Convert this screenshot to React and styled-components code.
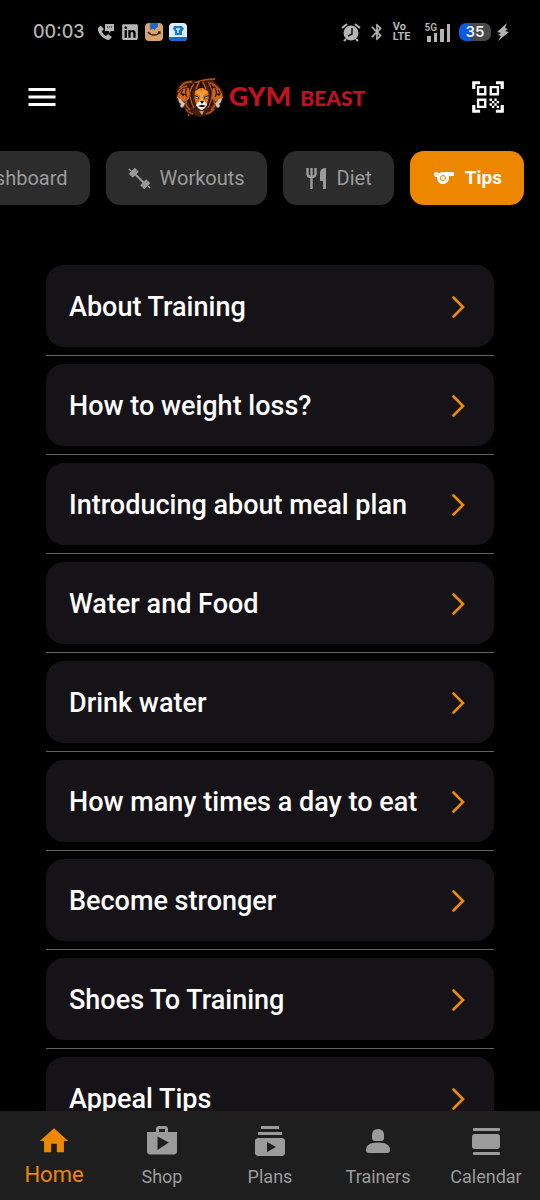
import React, { useState } from 'react';
import styled, { createGlobalStyle } from 'styled-components';
import { MdMenu, MdQrCodeScanner, MdHome, MdShop, MdSubscriptions, MdSports, MdBluetooth } from 'react-icons/md';
import { FaLinkedin } from 'react-icons/fa';

const GlobalStyle = createGlobalStyle`
  * { box-sizing: border-box; }
  body { margin: 0; background: #000; }
  button { font: inherit; letter-spacing: inherit; border: 0; background: none; padding: 0; cursor: pointer; }
  svg { display: block; flex: none; }
`;

const Screen = styled.div`
  display: flex;
  flex-direction: column;
  height: 100vh;
  background: #000;
  color: #fff;
  font-family: Roboto, "Liberation Sans", sans-serif;
`;

const StatusBar = styled.div`
  display: flex;
  align-items: center;
  justify-content: space-between;
  height: 64px;
  padding: 0 31px 0 33px;
  color: #b4b4b4;
  flex: none;
`;

const StatusGroup = styled.div`
  display: flex;
  align-items: center;
  gap: 6px;
`;

const Clock = styled.time`
  font: 500 18px/24px Inter, sans-serif;
  margin-right: 6px;
`;

const VoLte = styled.span`
  font: 700 11px/10px Roboto, sans-serif;
  text-align: left;
`;

const Signal = styled.span`
  display: flex;
  align-items: flex-start;
  margin: 0 2px 0 8px;
`;

const NetworkLabel = styled.span`
  font: 600 10px/10px Roboto, sans-serif;
  margin-right: -10px;
`;

const Battery = styled.span`
  width: 32px;
  height: 18px;
  border-radius: 7px;
  background: linear-gradient(90deg, #0a5be0 0 38%, #4a4a4a 38%);
  color: #f0f0f0;
  font: 600 15px/18px Inter, sans-serif;
  text-align: center;
`;

const Header = styled.header`
  display: grid;
  grid-template-columns: 1fr auto 1fr;
  align-items: center;
  height: 66px;
  padding: 0 24px;
  flex: none;
`;

const MenuButton = styled.button`
  justify-self: start;
  color: #fff;
`;

const ScanButton = styled.button`
  && {
    justify-self: end;
    padding-right: 9px;
    color: #fff;
  }
`;

const Brand = styled.div`
  display: flex;
  align-items: center;
  gap: 4px;
`;

const BrandName = styled.h1`
  display: flex;
  align-items: baseline;
  gap: 9px;
  margin: 0;
  color: #c01320;
  font: 900 27px/32px Lato, "Liberation Sans", sans-serif;
`;

const BrandWord = styled.span`
  font-size: ${(p) => p.$size}px;
`;

const Tabs = styled.nav`
  display: flex;
  justify-content: flex-end;
  gap: 16px;
  padding: 21px 16px 0;
  overflow: hidden;
  flex: none;
`;

const Tab = styled.button`
  && {
    display: flex;
    align-items: center;
    gap: 9px;
    flex: none;
    height: 54px;
    padding: 0 22px;
    border-radius: 14px;
    background: ${(p) => (p.$active ? '#ee8700' : '#2c2c2c')};
    color: ${(p) => (p.$active ? '#fff' : '#9b9b9b')};
    font-size: ${(p) => (p.$active ? 19 : 20)}px;
    line-height: 24px;
    font-weight: ${(p) => (p.$active ? 700 : 400)};
  }
`;

const TipList = styled.ul`
  flex: 1;
  min-height: 0;
  margin: 60px 46px 0;
  padding: 0;
  list-style: none;
  overflow-y: auto;
  scrollbar-width: none;
`;

const TipItem = styled.li`
  padding-bottom: 8px;
  margin-bottom: 8px;
  border-bottom: 1px solid #626262;
`;

const TipCard = styled.button`
  && {
    display: flex;
    align-items: center;
    justify-content: space-between;
    width: 100%;
    height: 82px;
    padding: 2px 29px 0 23px;
    border-radius: 18px;
    background: #151218;
    color: #fff;
    font-size: 27px;
    font-weight: 500;
    text-align: left;
  }
`;

const BottomBar = styled.nav`
  display: grid;
  grid-template-columns: repeat(5, 1fr);
  height: 89px;
  border-top: 1px solid #2c1d12;
  background: #1e1e1e;
  flex: none;
`;

const BottomItem = styled.button`
  && {
    display: flex;
    flex-direction: column;
    align-items: center;
    padding-top: 12px;
    gap: ${(p) => (p.$active ? 5 : 7)}px;
    color: ${(p) => (p.$active ? '#ee8700' : '#9b9b9b')};
    font-size: ${(p) => (p.$active ? 22 : 18)}px;
    line-height: 24px;
  }
`;

const BottomIcon = styled.span`
  display: flex;
  align-items: center;
  justify-content: center;
  height: 34px;
`;

const Lion = () => (
  <svg width="50" height="42" viewBox="0 0 50 42" aria-label="Three lion heads" role="img">
    <path d="M2 13 7 6l8-2 8 1 10-1 9-3-3 4 4 4 5 6v9l-4 8-6 2-6 5-7 2-8-3-5-4-7-4-4-8z" fill="#4a1d08" />
    <path d="M5 12q4-7 12-6M3 16q3-5 9-6M20 7q8-4 20-4M33 7q8 0 10 7M37 9q8 2 9 9M11 33q2 4 7 5M39 33q-3 4-8 5M13 38l1 2" fill="none" stroke="#b5530f" strokeWidth="1.6" />
    <path d="M17 8q-5 5-4 12t3 11M21 7q-6 6-5 13t4 13M32 7q6 5 4 13t-3 13M36 9q4 5 3 11t-4 10M26 5v8M23 7l1 6M29 7l-1 6" fill="none" stroke="#0d0502" strokeWidth="1.4" />
    <path d="M19 8q-5 6-4 12t4 12M34 8q4 6 3 12t-4 12M24 6l-3 7M28 6l3 7" fill="none" stroke="#c25e15" strokeWidth="1.2" />
    <path d="m20 15 5-3h3l5 3 1 6-2 7-3 5h-5l-3-5-2-7z" fill="#d9741c" />
    <path d="m20 16 5-3 1 4 1-4 6 3-4 3h-6z" fill="#f49a35" />
    <path d="m19 19 5 2 1 2-5-1m14-3-5 2-1 2 5-1" fill="#0d0502" />
    <path d="m20 21 3 1m10-1-3 1" stroke="#ffe3a0" strokeWidth="1" />
    <path d="m25 19 1.5-1 1.5 1 1 6h-5z" fill="#f2a044" />
    <path d="m23 26 3-1h2l3 1 1 3-2 3-3 2h-1l-3-2-2-3z" fill="#efece5" />
    <path d="m25 25h4l-2 3zM23 30l3-1h2l3 1-3 1h-2z" fill="#110704" />
    <path d="M24 35h5l-2 4z" fill="#a8a5a2" />
    <path d="m14 12-6 1-5 5-1 4 4 1 3 3 5-3z" fill="#d1691a" />
    <path d="m38 12 5 1 4 5 1 4-3 1-3 3-5-3z" fill="#d1691a" />
    <path d="M12 13q-3 3 0 8M8 14l-2 3M40 13q3 3 0 8M43 14l2 3" fill="none" stroke="#2a0f05" strokeWidth="1.2" />
    <path d="m5 17 6 1-3 2M46 17l-5 1 3 2" fill="#120603" />
    <path d="m3 22 3 1 2 3 2 1-1 3-2 2-2-2 1-2-2-2zM47 22l-3 1-2 3-2 1 1 3 2 2 2-2-1-2 2-2z" fill="#c9c5c0" />
    <path d="m12 21-1 8 4 5M38 21l2 8-4 5" fill="none" stroke="#b9560f" strokeWidth="1.4" />
  </svg>
);

const PhoneMessage = () => (
  <svg width="18" height="18" viewBox="0 0 18 18" fill="currentColor">
    <path d="M3 3 1 5c-1 5 6 12 11 12l3-3-4-3-2 2C7 12 5 10 5 8l2-2-3-3z" />
    <path d="M8 1h9v7h-3l-2 2V8H8z" />
    <path d="M10 4h1m1 0h1m1 0h1" stroke="#000" />
  </svg>
);

const ShoppingApp = () => (
  <svg width="18" height="18" viewBox="0 0 18 18">
    <rect width="18" height="18" rx="4" fill="#d8a36c" />
    <path d="M5 0h8v4l-2 1-1 2-2-1-3 1z" fill="#2467cb" />
    <path d="M3 9c3 4 9 4 12 0m-2 0h2v2" fill="none" stroke="#38210f" strokeWidth="1.3" />
  </svg>
);

const ShirtApp = () => (
  <svg width="18" height="18" viewBox="0 0 18 18">
    <rect width="18" height="18" rx="4" fill="#e1edf7" />
    <path d="M0 14h18q0 4-4 4H4q-4 0-4-4z" fill="#1769d2" />
    <path d="M5 3h8l2 3-2 2v4H6V8L4 6z" fill="#1876d4" />
    <path d="M7 6h4M9 6v4" stroke="#e1edf7" strokeWidth="1.5" />
  </svg>
);

const Alarm = () => (
  <svg width="20" height="20" viewBox="0 0 20 20">
    <circle cx="10" cy="11" r="7.5" fill="currentColor" />
    <path d="m1 6 5-4m8 0 5 4M5 17l-2 2m12-2 2 2" stroke="currentColor" strokeWidth="2" />
    <path d="M11 6v6l-4 2" fill="none" stroke="#111" strokeWidth="1.5" />
  </svg>
);

const SignalBars = () => (
  <svg width="24" height="19" viewBox="0 0 24 19" fill="currentColor">
    <path d="M0 13h4v6H0zM7 10h3v9H7zM13 6h4v13h-4zM20 1h3v18h-3z" />
  </svg>
);

const Charge = () => (
  <svg width="12" height="18" viewBox="0 0 12 18" fill="currentColor">
    <path d="M10 0 0 9l4 1-3 2 3 1-3 5 11-9-4-1 3-2-3-1z" />
  </svg>
);

const Dumbbell = () => (
  <svg width="23" height="23" viewBox="0 0 23 23" fill="none" stroke="currentColor">
    <path d="m4 4 15 15" strokeWidth="2" />
    <path d="m4 10 6-6M13 19l6-6" strokeWidth="2.2" />
    <path d="m2 8 6-6M15 21l6-6" strokeWidth="3.4" />
    <path d="m1 2 2 2M20 19l2 2" strokeWidth="1.6" />
  </svg>
);

const Cutlery = () => (
  <svg width="23" height="23" viewBox="0 0 23 23">
    <path d="M2.5 1v6q0 3 4 3t4-3V1m-4 0v21" fill="none" stroke="currentColor" strokeWidth="2.4" />
    <path d="M21 1v21h-3v-8h-3V6q0-5 6-5z" fill="currentColor" />
  </svg>
);

const Chevron = () => (
  <svg width="14" height="24" viewBox="0 0 14 24" fill="none" stroke="#ee8b0c" strokeWidth="2.6" strokeLinecap="round">
    <path d="m2.5 2.5 9.5 9.5-9.5 9.5" />
  </svg>
);

const Person = () => (
  <svg width="34" height="34" viewBox="0 0 34 34" fill="currentColor">
    <path d="M17 5q6 0 6 6v3q0 3-3 3h-6q-3 0-3-3v-3q0-6 6-6z" />
    <path d="M17 18.5q12 0 12 7.500 0 3-3 3H8q-3 0-3-3 0-7.500 12-7.500z" />
  </svg>
);

const DayView = () => (
  <svg width="34" height="34" viewBox="0 0 34 34" fill="currentColor">
    <rect x="4" y="4" width="27" height="3" rx="1" />
    <rect x="4" y="28" width="27" height="3" rx="1" />
    <rect x="3" y="10" width="28" height="15" rx="3" />
  </svg>
);

const tabs = [
  { label: 'Dashboard' },
  { label: 'Workouts', icon: <Dumbbell /> },
  { label: 'Diet', icon: <Cutlery /> },
  { label: 'Tips', icon: <MdSports size={24} /> },
];

const tips = [
  'About Training', 'How to weight loss?', 'Introducing about meal plan',
  'Water and Food', 'Drink water', 'How many times a day to eat',
  'Become stronger', 'Shoes To Training', 'Appeal Tips',
];

const destinations = [
  { label: 'Home', icon: <MdHome size={34} /> },
  { label: 'Shop', icon: <MdShop size={36} /> },
  { label: 'Plans', icon: <MdSubscriptions size={36} /> },
  { label: 'Trainers', icon: <Person /> },
  { label: 'Calendar', icon: <DayView /> },
];

export default function App() {
  const [tab, setTab] = useState('Tips');
  const [destination, setDestination] = useState('Home');
  return (
    <Screen>
      <GlobalStyle />
      <StatusBar>
        <StatusGroup>
          <Clock>00:03</Clock>
          <PhoneMessage /><FaLinkedin size={18} /><ShoppingApp /><ShirtApp />
        </StatusGroup>
        <StatusGroup>
          <Alarm /><MdBluetooth size={20} />
          <VoLte>Vo<br />LTE</VoLte>
          <Signal><NetworkLabel>5G</NetworkLabel><SignalBars /></Signal>
          <Battery>35</Battery><Charge />
        </StatusGroup>
      </StatusBar>
      <Header>
        <MenuButton aria-label="Open menu"><MdMenu size={36} /></MenuButton>
        <Brand>
          <Lion />
          <BrandName><BrandWord $size={27}>GYM</BrandWord><BrandWord $size={21}>BEAST</BrandWord></BrandName>
        </Brand>
        <ScanButton aria-label="Scan code"><MdQrCodeScanner size={38} /></ScanButton>
      </Header>
      <Tabs>
        {tabs.map((t) => (
          <Tab key={t.label} $active={tab === t.label} onClick={() => setTab(t.label)}>
            {t.icon}{t.label}
          </Tab>
        ))}
      </Tabs>
      <TipList>
        {tips.map((tip) => (
          <TipItem key={tip}><TipCard>{tip}<Chevron /></TipCard></TipItem>
        ))}
      </TipList>
      <BottomBar>
        {destinations.map((d) => (
          <BottomItem key={d.label} $active={destination === d.label} onClick={() => setDestination(d.label)}>
            <BottomIcon>{d.icon}</BottomIcon>{d.label}
          </BottomItem>
        ))}
      </BottomBar>
    </Screen>
  );
}
